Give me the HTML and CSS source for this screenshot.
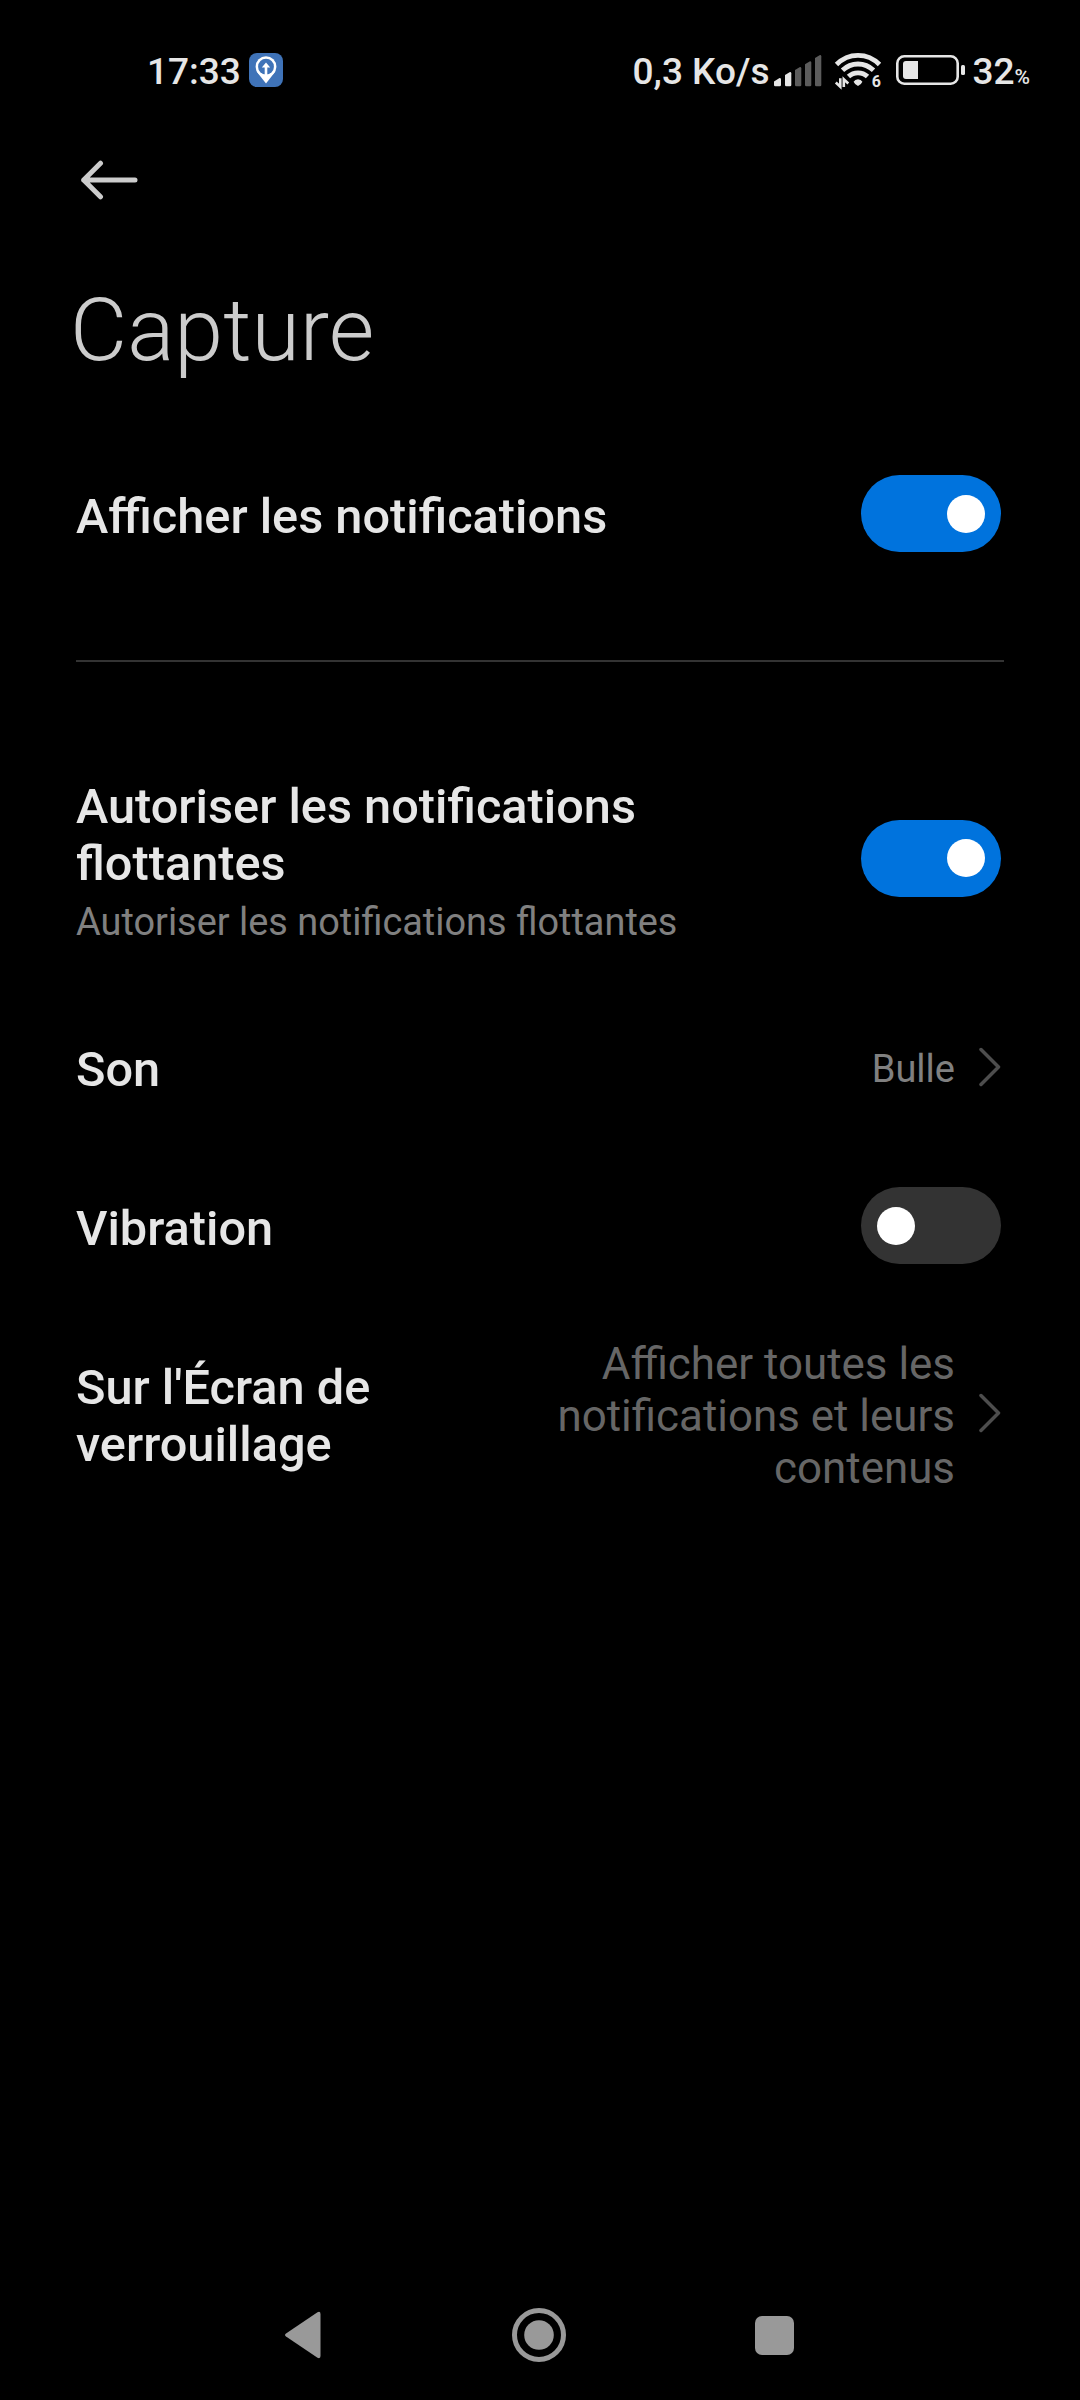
FILE: index.html
```html
<!DOCTYPE html>
<html lang="fr">
<head>
<meta charset="utf-8">
<title>Capture</title>
<link rel="stylesheet" href="styles.css">
</head>
<body>
<div class="screen">
  <header class="status">
    <span class="clock">17:33</span>
    <svg class="app-icon" width="34" height="34" viewBox="0 0 34 34">
      <rect width="34" height="34" rx="8" fill="#3f73b8"/>
      <path d="M7.6 18.5 L17 30.5 L26.4 18.5Z" fill="#fff"/>
      <circle cx="17" cy="13.7" r="10.4" fill="#fff"/>
      <circle cx="17" cy="13.7" r="7.9" fill="#3f73b8"/>
      <path d="M17 9.400l4.200 5h-2.900v8h-2.600v-8h-2.900z" fill="#fff"/>
    </svg>
    <span class="speed">0,3 Ko/s</span>
    <svg class="signal" width="48" height="32" viewBox="0 0 48 32">
      <g fill="#e6e6e6">
        <path d="M0 26.500l5.500-3.500q1.500 0 1.500 1.300V30q0 1.300-1.300 1.300H1.300Q0 31.300 0 30z"/>
        <path d="M11 20l5-3q1.300 0 1.300 1.300V30q0 1.300-1.300 1.300h-3.700Q11 31.300 11 30z"/>
      </g>
      <g fill="#5c5c5c">
        <path d="M21 15l5-3q1.300 0 1.300 1.300V30q0 1.300-1.300 1.300h-3.700Q21 31.300 21 30z"/>
        <path d="M31 9.300l5-3q1.300 0 1.300 1.300V30q0 1.300-1.300 1.300h-3.700Q31 31.300 31 30z"/>
        <path d="M41 3l5-3q1.300 0 1.300 1.300V30q0 1.300-1.300 1.300h-3.700Q41 31.300 41 30z"/>
      </g>
    </svg>
    <svg class="wifi" width="46" height="38" viewBox="0 0 46 38">
      <g fill="none" stroke="#e6e6e6" stroke-width="4.800">
        <path d="M1.500 12.500Q10.500 3.300 23 3.300T44.500 12.500"/>
        <path d="M7.500 18.300Q14 12 23 12T38.500 18.300"/>
        <path d="M13.500 24.600Q17.500 20.800 23 20.800T32.500 24.600"/>
      </g>
      <path d="M18.600 29.800Q20 27.300 23 27.300T27.400 29.800Q26.500 32.300 23 34Q19.500 32.300 18.600 29.800z" fill="#e6e6e6"/>
      <path d="M5.300 26.300v8.500L.8 30.500M8.800 35.100V27.300l4.500 4.200" fill="none" stroke="#e6e6e6" stroke-width="2.600"/>
      <text class="wifi-gen" x="36.800" y="35">6</text>
    </svg>
    <svg class="battery" width="69" height="30" viewBox="0 0 69 30">
      <rect x="1.300" y="1.300" width="60.400" height="27.400" rx="7" fill="none" stroke="#e6e6e6" stroke-width="2.600"/>
      <path d="M10 6h12v18H10q-3 0-3-3V9q0-3 3-3z" fill="#e6e6e6"/>
      <rect x="65" y="10" width="4" height="10" rx="1.500" fill="#e6e6e6"/>
    </svg>
    <span class="percent">32<small>%</small></span>
  </header>

  <nav class="toolbar">
    <svg width="58" height="40" viewBox="0 0 58 40" fill="none" stroke="#ccc" stroke-width="5" stroke-linecap="round" stroke-linejoin="round">
      <path d="M20.500 3.200L3.700 20l16.800 16.800M3.700 20H55"/>
    </svg>
  </nav>

  <h1 class="title">Capture</h1>

  <main>
    <section class="row">
      <div class="label">Afficher les notifications</div>
      <span class="switch on"></span>
    </section>
    <hr class="divider">
    <section class="row row-floating">
      <div class="label">Autoriser les notifications<br>flottantes
        <p class="summary">Autoriser les notifications flottantes</p>
      </div>
      <span class="switch on"></span>
    </section>
    <section class="row">
      <div class="label">Son</div>
      <div class="value">Bulle</div>
      <svg class="chevron" width="22" height="40" viewBox="0 0 22 40"><path d="M2 2.500L19.500 20L2 37.500"/></svg>
    </section>
    <section class="row">
      <div class="label">Vibration</div>
      <span class="switch"></span>
    </section>
    <section class="row row-lock">
      <div class="label">Sur l'Écran de<br>verrouillage</div>
      <div class="value value-long">Afficher toutes les<br>notifications et leurs<br>contenus</div>
      <svg class="chevron" width="22" height="40" viewBox="0 0 22 40"><path d="M2 2.500L19.500 20L2 37.500"/></svg>
    </section>
  </main>

  <footer class="navbar">
    <svg width="38" height="48" viewBox="0 0 38 48"><path d="M2 22.500L33.500 1.200Q36.500 0 36.500 3V45Q36.500 48 33.500 46.800L2 25.500Q0 24 2 22.500z" fill="#999"/></svg>
    <svg width="54" height="54" viewBox="0 0 54 54"><circle cx="27" cy="27" r="24.500" fill="none" stroke="#999" stroke-width="5"/><circle cx="27" cy="27" r="14.800" fill="#999"/></svg>
    <span class="recents"></span>
  </footer>
</div>
</body>
</html>
```
FILE: styles.css
```css
* { box-sizing: border-box; }

body {
  margin: 0;
  background: #000;
  color: #e6e6e6;
  font-family: Roboto, sans-serif;
}

.screen {
  display: flex;
  flex-direction: column;
  width: 1080px;
  height: 2400px;
}

.status {
  display: flex;
  align-items: center;
  height: 140px;
  padding: 0 50px 0 147px;
  font-size: 37px;
  font-weight: 500;
  line-height: 44px;
}

.clock, .speed { margin-top: 3px; white-space: nowrap; }
.app-icon { margin-left: 8px; }
.speed { margin-left: auto; }
.signal { margin-left: 5px; margin-top: 1px; }
.wifi { margin-left: 13px; margin-top: 2px; overflow: visible; }
.wifi-gen { font-size: 16px; font-weight: 700; fill: #e6e6e6; }
.battery { margin-left: 15px; }
.percent { height: 44px; margin: 3px 0 0 7px; white-space: nowrap; }
.percent small { font-size: 21px; line-height: 1; }

.toolbar {
  display: flex;
  align-items: center;
  height: 80px;
  padding-left: 80px;
}

.title {
  height: 214px;
  margin: 0;
  padding: 58px 0 0 70px;
  color: #ccc;
  font-size: 88px;
  font-weight: 300;
  line-height: 104px;
}

.row {
  display: flex;
  align-items: center;
  height: 159px;
  padding: 0 79px 0 76px;
}

.row-floating { height: 260px; margin-bottom: -1px; }
.row-lock { height: 216px; }

.label {
  flex: 1;
  padding-top: 6px;
  font-size: 48.7px;
  font-weight: 500;
  line-height: 57px;
}

.summary {
  margin: 8px 0 0;
  color: #808080;
  font-size: 37.9px;
  font-weight: 400;
  line-height: 45px;
}

.value {
  padding-top: 5px;
  color: #808080;
  font-size: 38px;
  line-height: 45px;
  text-align: right;
}

.value-long { color: #666; font-size: 43.9px; line-height: 52px; }

.chevron {
  margin-left: 24px;
  fill: none;
  stroke: #4d4d4d;
  stroke-width: 3.5;
  stroke-linecap: round;
  stroke-linejoin: round;
}

.switch {
  display: flex;
  align-items: center;
  width: 140px;
  height: 77px;
  padding: 0 16px;
  border-radius: 39px;
  background: #333;
}

.switch::before {
  content: "";
  width: 38px;
  height: 38px;
  border-radius: 50%;
  background: #fff;
}

.switch.on { justify-content: flex-end; background: #0073dd; }

.divider {
  height: 2px;
  margin: 67px 76px 66px;
  border: 0;
  background: #333;
}

.navbar {
  display: flex;
  align-items: center;
  justify-content: space-between;
  height: 130px;
  margin-top: auto;
  padding: 0 286px 0 284px;
}

.recents {
  width: 39px;
  height: 39px;
  border-radius: 7px;
  background: #999;
}
```
